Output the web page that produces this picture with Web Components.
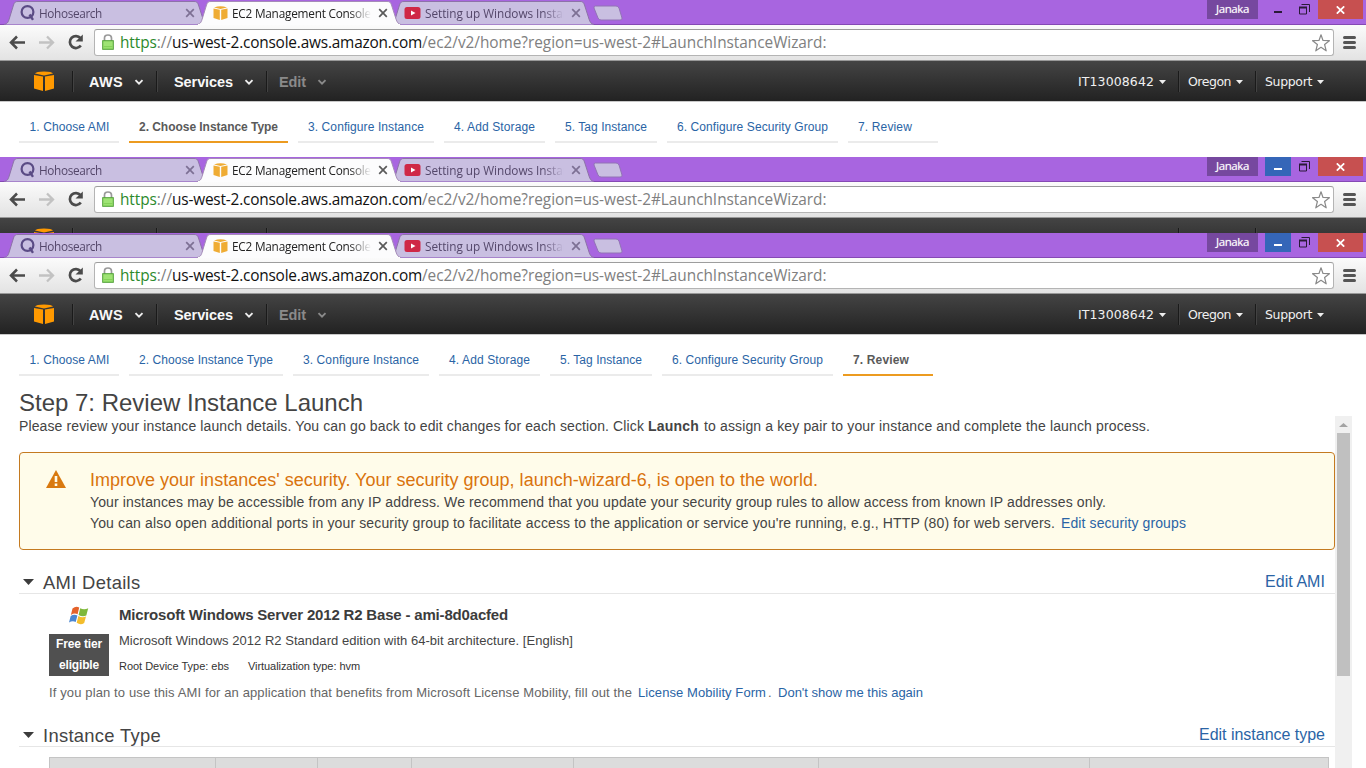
<!DOCTYPE html>
<html lang="en">
<head>
<meta charset="utf-8">
<title>EC2 Management Console</title>
<style>
html,body{margin:0;height:768px;overflow:hidden;background:#fff;font-family:"Liberation Sans",Arial,sans-serif;color:#444}
body{display:flex;flex-direction:column}
</style>
</head>
<body>
<console-window style="height:157px">
  <wizard-steps current="2"></wizard-steps>
</console-window>
<console-window style="height:76px" hover collapsed></console-window>
<console-window style="height:535px" hover>
  <wizard-steps current="7"></wizard-steps>
  <review-page></review-page>
</console-window>
<script>
const component = (name, html, setup) => customElements.define(name, class extends HTMLElement {
  connectedCallback() {
    if (this.shadowRoot) return;
    this.attachShadow({mode: 'open'}).innerHTML = typeof html === 'function' ? html(this) : html;
    if (setup) setup(this);
  }
});

/* One full-width window: tabs, toolbar, AWS bar, then the page content. */
component('console-window', el => `
<style>:host{display:block;overflow:hidden;flex:none}</style>
<browser-tabs ${el.hasAttribute('hover') ? 'hover' : ''}></browser-tabs>
<browser-toolbar></browser-toolbar>
<aws-bar ${el.hasAttribute('collapsed') ? 'collapsed' : ''}></aws-bar>
<slot></slot>`);

component('browser-tab', el => {
  const on = el.hasAttribute('active');
  return `
<style>
:host{display:flex;align-items:center;position:relative;width:204px;height:24px;margin-right:-11px;box-sizing:border-box;padding:1px 0 0 16px;flex:none;z-index:${on ? 2 : 1};font:11.800px "Open Sans","Noto Sans",sans-serif;color:${on ? '#222' : '#54476a'}}
.shape{position:absolute;left:0;top:0;z-index:-1}
slot[name=icon]{display:block}
.icon{width:16px;height:16px;flex:none;display:block}
.title{width:139px;margin-left:3px;white-space:nowrap;overflow:hidden;-webkit-mask-image:linear-gradient(90deg,#000 118px,transparent 139px)}
.x{margin-left:7px;flex:none}
</style>
<svg class="shape" width="204" height="25"><path d="M0 24.5C4 24 4.500 21 5.500 18L9.500 5C10.500 2 11.500 1.500 14 1.500H190C192.500 1.500 193.500 2 194.500 5L199 19C200 22 201 24 204 24.500" fill="${on ? '#fcfcfd' : '#c9bfe1'}" stroke="${on ? '#a58bb8' : '#8d72a9'}"/>${on ? '<path d="M1 24.500H203" stroke="#fcfcfd" stroke-width="1"/>' : ''}</svg>
<div class="icon"><slot name="icon"></slot></div>
<div class="title"><slot></slot></div>
<svg class="x" width="10" height="10"><path d="M1.200 1.200L8.800 8.800M8.800 1.200L1.200 8.800" stroke="${on ? '#5a5a5a' : '#7d7094'}" stroke-width="1.700"/></svg>`;
});

component('browser-tabs', el => `
<style>
:host{display:flex;height:25px;background:#a865e0;box-shadow:inset 0 -1px #8549b4;padding-left:4px;position:relative;box-sizing:border-box}
svg{display:block}
.new{margin:5px 0 0 8px;flex:none}
.controls{margin-left:auto;display:flex;height:19px;padding-right:3px;align-items:stretch}
.user{width:51px;background:#76489f;color:#fff;font:11.500px "Open Sans","Noto Sans",sans-serif;line-height:18px;text-align:center;margin-right:7px;text-shadow:0 0 1px #fff8}
.btn{display:flex;align-items:center;justify-content:center}
.min{width:26px;${el.hasAttribute('hover') ? 'background:#3566b8;color:#fff' : 'color:#2a1a38'}}
.max{width:27px}
.close{width:45px;background:#c75050}
</style>
<browser-tab><svg slot="icon" width="16" height="16" viewBox="0 0 16 16"><circle cx="7.500" cy="7" r="5.900" fill="none" stroke="#5b4b85" stroke-width="2.200"/><path d="M9.500 9.500L13 14.800" stroke="#5b4b85" stroke-width="2.400"/></svg><fit-text w="63">Hohosearch</fit-text></browser-tab>
<browser-tab active><svg slot="icon" width="16" height="16" viewBox="0 0 16 16"><path d="M.5 3.500L6.800 4.800V15L.5 13zM14.500 3.500L8.200 4.800V15L14.500 13zM1 2.500Q7.500 -.2 14 2.500L7.500 4z" fill="#efac34"/></svg><fit-text w="139">EC2 Management Console</fit-text></browser-tab>
<browser-tab><svg slot="icon" width="16" height="16" viewBox="0 0 16 16" overflow="visible"><rect x="-1.500" y="2" width="16" height="12" rx="2.500" fill="#cf2846"/><path d="M5 5.500L9.500 8L5 10.500z" fill="#fff"/></svg><fit-text w="145">Setting up Windows Instan</fit-text></browser-tab>
<svg class="new" width="34" height="17"><path d="M4.500 1H25Q27 1 28 3L31 13Q31.500 15 29 15H10Q8 15 7 13L3 3Q2.500 1 4.500 1z" fill="#c9bfe1" stroke="#9273b6"/></svg>
<div class="controls">
<div class="user"><fit-text w="33">Janaka</fit-text></div>
<div class="btn min"><svg width="8" height="11"><path d="M0 8H8" stroke="currentColor" stroke-width="2"/></svg></div>
<div class="btn max"><svg width="11" height="11" fill="none" stroke="#2a1a38"><path d="M2.500 .5H10.500V8"/><path d="M.5 3.500H7.500V10H.5z"/><path d="M0 3.500H8" stroke-width="2"/></svg></div>
<div class="btn close"><svg width="9" height="8"><path d="M.8 .3L8.200 7.700M8.200 .3L.8 7.700" stroke="#fff" stroke-width="1.700"/></svg></div>
</div>`);

component('browser-toolbar', `
<style>
:host{display:flex;height:36px;box-sizing:border-box;background:linear-gradient(#fbfbfb,#e3e3e3);border-bottom:1px solid #999;padding:4px 9px 0 9px;align-items:flex-start}
svg{display:block;flex:none}
.box{display:flex;align-items:center;flex:none;width:1240px;height:27px;box-sizing:border-box;border:1px solid #b4b4b4;border-top-color:#9d9d9d;border-radius:3px;background:#fff;padding:0 3px 0 7px;margin-left:9px}
.lock{margin-top:-1px}
.url{font:15.400px/22px "Open Sans","Noto Sans",sans-serif;color:#808080;white-space:nowrap;margin:1px 0 0 6px}
.g{color:#2c8a2c}.d{color:#111}
.star{margin-left:auto}
</style>
<svg width="76" height="27" fill="none"><path d="M2 13.500H16M8 7.500L2 13.500L8 19.500" stroke="#4b4b4b" stroke-width="2.500"/><path d="M30 13.500H44M38 7.500L44 13.500L38 19.500" stroke="#c2c2c2" stroke-width="2.300"/><path d="M71.500 9.200A6 6 0 1 0 71.800 16.500" stroke="#4b4b4b" stroke-width="2.700"/><path d="M73.800 5.500V12.500H66.500z" fill="#4b4b4b"/></svg>
<div class="box">
<svg class="lock" width="12" height="16"><path d="M2.500 7V4Q2.500 1 6 1T9.500 4V7" fill="none" stroke="#9a9a9a" stroke-width="1.700"/><rect x=".7" y="6.700" width="10.600" height="8.600" fill="#9ee374" stroke="#4f9e36"/><path d="M1.500 12.500H10.500M1.500 14.300H10.500" stroke="#84d25a"/></svg>
<div class="url"><fit-text w="52"><span class="g">https</span>://</fit-text><fit-text class="d" w="250">us-west-2.console.aws.amazon.com</fit-text><fit-text w="404.500">/ec2/v2/home?region=us-west-2#LaunchInstanceWizard:</fit-text></div>
<svg class="star" width="18" height="18"><path d="M9 .8L11 6.500L17.400 6.700L12.600 10.500L14.200 16.800L9 13.300L3.800 16.800L5.400 10.500L.6 6.700L7 6.500z" fill="#fff" stroke="#8a8a8a" stroke-width="1.200" stroke-linejoin="round"/></svg>
</div>
<svg width="13" height="27" style="margin-left:9px"><path d="M1.500 8.500H11.500M1.500 13.500H11.500M1.500 18.500H11.500" stroke="#555" stroke-width="3" stroke-linecap="round"/></svg>`);

component('aws-bar', el => {
  const label = t => el.hasAttribute('collapsed') ? '' : t;
  return `
<style>
:host{display:flex;height:41px;box-sizing:border-box;background:linear-gradient(#444,#222);border-bottom:1px solid #c8c8c8;padding:0 42px 0 34px;align-items:center;color:#f8f8f8;font-weight:bold;font-size:14.500px}
svg{display:block;flex:none}
i{width:1px;height:21px;background:#1a1a1a;border-right:1px solid #424242;box-sizing:content-box;flex:none}
.l{padding-top:2px}
.dim{color:#8a8a8a}
.r{font:12.500px "DejaVu Sans",Verdana,sans-serif;color:#f0f0f0}
.v{margin:2px 0 0 11px}
.t{margin:1px 0 0 5px}
</style>
<svg width="20" height="20"><path d="M0 4L9 5.500V20L0 17.500zM20 4L11 5.500V20L20 17.500zM1 2.600Q2 .5 10 .5T19 2.600L10 4.600z" fill="#ff9900"/></svg>
<i style="margin-left:18px"></i>
<fit-text class="l" w="34" style="margin-left:15px">${label('AWS')}</fit-text><svg class="v" width="10" height="7"><path d="M1.500 1.200L5 4.700L8.500 1.200" fill="none" stroke="#eee" stroke-width="1.900"/></svg>
<i style="margin-left:12px"></i>
<fit-text class="l" w="59" style="margin-left:16px">${label('Services')}</fit-text><svg class="v" width="10" height="7"><path d="M1.500 1.200L5 4.700L8.500 1.200" fill="none" stroke="#eee" stroke-width="1.900"/></svg>
<i style="margin-left:12px"></i>
<fit-text class="dim l" w="27" style="margin-left:11px">${label('Edit')}</fit-text><svg class="v" width="10" height="7"><path d="M1.500 1.200L5 4.700L8.500 1.200" fill="none" stroke="#8a8a8a" stroke-width="1.900"/></svg>
<fit-text class="r" w="76" style="margin-left:auto">${label('IT13008642')}</fit-text><svg class="t" width="7" height="4"><path d="M0 0H7L3.500 4z" fill="#eee"/></svg>
<i style="margin-left:12px"></i>
<fit-text class="r" w="43" style="margin-left:8px">${label('Oregon')}</fit-text><svg class="t" width="7" height="4"><path d="M0 0H7L3.500 4z" fill="#eee"/></svg>
<i style="margin-left:12px"></i>
<fit-text class="r" w="47" style="margin-left:8px">${label('Support')}</fit-text><svg class="t" width="7" height="4"><path d="M0 0H7L3.500 4z" fill="#eee"/></svg>`;
});

component('wizard-steps', el => {
  const cur = +el.getAttribute('current');
  const steps = [['Choose AMI',80,100],['Choose Instance Type',134,154],['Configure Instance',116,136],['Add Storage',81,101],['Tag Instance',82,102],['Configure Security Group',151,171],['Review',54,90]];
  const bold = {2:[139,159], 7:[56,90]};
  return `
<style>
:host{display:flex;gap:10px;padding:10px 0 0 19px;height:31px;font-size:12px;color:#2a64a5}
div{height:31px;line-height:30px;box-sizing:border-box;border-bottom:2px solid #ebebeb;padding-left:10px;flex:none}
div:first-of-type{padding-left:10.500px}
.on{color:#5a5a5a;font-weight:bold;border-color:#ec9b20}
</style>` + steps.map(([t, w, box], i) => {
    const on = i + 1 === cur;
    if (on) [w, box] = bold[cur];
    return `<div class="${on ? 'on' : ''}" style="width:${box}px"><fit-text w="${w}">${i + 1}. ${t}</fit-text></div>`;
  }).join('');
});

component('section-head', `
<style>
:host{display:flex;align-items:center;height:24px;box-sizing:border-box;border-bottom:1px solid #e6e6e6;padding:2px 10px 0 4px;font-size:18.400px;line-height:22px;color:#444}
svg{margin:-2px 9px 0 0}
.edit{margin-left:auto;font-size:16px;color:#2a64a5;margin-top:-2px}
</style>
<svg width="11" height="6"><path d="M0 0H11L5.500 6z" fill="#3c3c3c"/></svg>
<slot></slot><span class="edit"><slot name="edit"></slot></span>`);

component('review-page', `
<style>
:host{display:block;position:relative;height:392px;padding-left:19px}
h1{margin:0;padding-top:12px;height:30px;line-height:30px;font-size:24px;font-weight:normal;color:#444}
p{margin:0;white-space:nowrap}
.intro{height:18px;line-height:16px;font-size:14px;color:#444}
.main{width:1316px}
.alert{margin-top:16px;height:98px;box-sizing:border-box;border:1px solid #c47a20;border-radius:4px;background:#fffcea;display:flex;padding:16px 0 0 26px;color:#444;font-size:14px;line-height:21px}
.alert svg{flex:none;margin:1px 24px 0 0}
.alert h2{margin:0;font-size:18px;line-height:23px;font-weight:normal;color:#d9730d}
.link{color:#2a64a5}
.ami{display:flex;margin:0 0 0 30px;height:85px}
.side{width:60px;margin-right:10px;display:flex;flex-direction:column;align-items:center}
.side svg{margin-top:12px;flex:none}
.badge{margin-top:9px;width:60px;height:42px;background:#505050;color:#fff;font:bold 12px/21px "Liberation Sans",sans-serif;text-align:center}
.name{font-weight:bold;font-size:15px;line-height:20px;margin-top:11px;color:#3c3c3c}
.desc{font-size:13px;line-height:20px;margin-top:6px}
.meta{display:flex;gap:19px;font-size:11px;line-height:20px;margin-top:5px;color:#333}
.lic{margin:-1px 0 0 30px;font-size:13px;line-height:20px;color:#666;height:35px;padding-top:5px;box-sizing:border-box}
.grid{display:grid;grid-template-columns:165px 101px 93px 161px 244px 270px 1fr;gap:1px;width:1280px;height:30px;margin:10px 0 0 30px;border:1px solid #c4c4c4;background:#c4c4c4;box-sizing:border-box}
.grid b{background:#dcdcdc}
.bar{position:absolute;left:1335px;top:40px;width:17px;height:353px;background:#f0f0f0;display:flex;flex-direction:column;align-items:center}
.bar svg{margin:7px 0 6px}
.thumb{width:13px;height:243px;background:#c0c0c0}
</style>
<div class="main">
<h1><fit-text w="344">Step 7: Review Instance Launch</fit-text></h1>
<p class="intro"><fit-text w="629">Please review your instance launch details. You can go back to edit changes for each section. Click </fit-text><fit-text w="51"><b>Launch</b></fit-text><fit-text w="446" style="margin-left:5px">to assign a key pair to your instance and complete the launch process.</fit-text></p>
<div class="alert">
<svg width="20" height="18"><path d="M10 0L20 18H0z" fill="#d9790f"/><path d="M10 6V12" stroke="#fffcea" stroke-width="2.600"/><path d="M10 13.500V16" stroke="#fffcea" stroke-width="2.600"/></svg>
<div><h2><fit-text w="728">Improve your instances' security. Your security group, launch-wizard-6, is open to the world.</fit-text></h2>
<p><fit-text w="1016">Your instances may be accessible from any IP address. We recommend that you update your security group rules to allow access from known IP addresses only.</fit-text></p>
<p><fit-text w="965">You can also open additional ports in your security group to facilitate access to the application or service you're running, e.g., HTTP (80) for web servers.</fit-text><fit-text class="link" w="125" style="margin-left:6px">Edit security groups</fit-text></p></div>
</div>
<section-head style="margin-top:20px"><fit-text w="97.500">AMI Details</fit-text><fit-text slot="edit" w="60">Edit AMI</fit-text></section-head>
<div class="ami">
<div class="side"><svg width="20" height="19"><path d="M3.500 2.500Q7 -.5 10.200 1.600L8.600 8.300Q5.500 6.500 1.900 9z" fill="#e4622a"/><path d="M11.200 2.200Q15 4.500 19.200 2.200L17.300 9.500Q13.500 11.300 9.600 8.900z" fill="#7fb83a"/><path d="M1.700 10Q5 7.800 8.400 9.400L6.700 16Q3.500 14.300 0 16.500z" fill="#4a86d2"/><path d="M9.400 10Q13 12.200 17 10.500L15.200 17Q11.500 19.500 7.700 16.700z" fill="#f3bd2d"/></svg>
<div class="badge"><fit-text w="46">Free tier</fit-text><br><fit-text w="40">eligible</fit-text></div></div>
<div><p class="name"><fit-text w="389">Microsoft Windows Server 2012 R2 Base - ami-8d0acfed</fit-text></p>
<p class="desc"><fit-text w="454">Microsoft Windows 2012 R2 Standard edition with 64-bit architecture. [English]</fit-text></p>
<div class="meta"><fit-text w="110">Root Device Type: ebs</fit-text><fit-text w="112">Virtualization type: hvm</fit-text></div></div>
</div>
<p class="lic"><fit-text w="583">If you plan to use this AMI for an application that benefits from Microsoft License Mobility, fill out the</fit-text><fit-text class="link" w="128" style="margin-left:6px">License Mobility Form</fit-text><fit-text w="4" style="margin-left:2px">.</fit-text><fit-text class="link" w="145" style="margin-left:6px">Don't show me this again</fit-text></p>
<section-head style="margin-top:10px"><fit-text w="118">Instance Type</fit-text><fit-text slot="edit" w="126">Edit instance type</fit-text></section-head>
<div class="grid"><b></b><b></b><b></b><b></b><b></b><b></b><b></b></div>
</div>
<div class="bar"><svg width="9" height="4"><path d="M0 4H9L4.500 0z" fill="#a3a3a3"/></svg><div class="thumb"></div></div>`);

/* Sets a run of text to a given advance width by adjusting its tracking. */
component('fit-text', '<style>:host{display:inline-block;white-space:nowrap;flex:none;vertical-align:baseline}</style><slot></slot>', el => {
  const w = +el.getAttribute('w');
  const text = el.textContent.trim();
  if (text) el.style.letterSpacing = (w - (el.textContent.endsWith(' ') ? 4 : 0) - el.getBoundingClientRect().width) / text.length + 'px';
  el.style.width = w + 'px';
});
</script>
</body>
</html>
